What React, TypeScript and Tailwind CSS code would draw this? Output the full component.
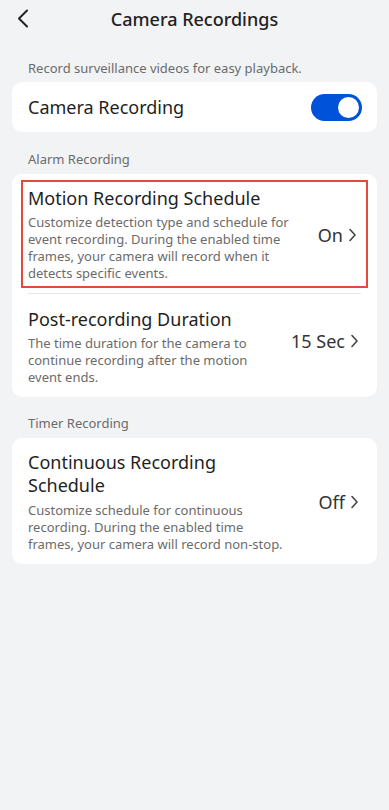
import React from "react";

const Chevron = () => (
  <svg width="9" height="14" viewBox="0 0 9 14" fill="none" className="ml-[5px]">
    <path d="M2 1.5 L7 7 L2 12.5" stroke="#444" strokeWidth="1.6" strokeLinecap="round" strokeLinejoin="round" />
  </svg>
);

export default function App() {
  return (
    <div
      className="w-[389px] min-h-[810px] bg-[#f2f3f5] text-[#1f1f1f]"
      style={{ fontFamily: '"Noto Sans", "Open Sans", Arial, sans-serif' }}
    >
      {/* Header */}
      <div className="relative h-[38px] flex items-center justify-center">
        <svg width="14" height="20" viewBox="0 0 14 20" fill="none" className="absolute left-[16px] top-[9px]">
          <path d="M11 1.5 L3 9.5 L11 17.5" stroke="#222" strokeWidth="2" strokeLinecap="round" strokeLinejoin="round" />
        </svg>
        <div className="text-[18px] leading-[24px] font-medium text-[#222]">Camera Recordings</div>
      </div>

      <div className="px-[28px] pt-[22px] pb-[5px] text-[13px] leading-[17px] text-[#6b6b6b]">
        Record surveillance videos for easy playback.
      </div>

      {/* Card 1 */}
      <div className="mx-[12px] h-[50px] bg-white rounded-[10px] flex items-center justify-between pl-[16px] pr-[15px]">
        <div className="text-[18px] leading-[24px]">Camera Recording</div>
        <div className="w-[51px] h-[27px] rounded-full bg-[#0052d9] flex items-center justify-end pr-[3px]">
          <div className="w-[21px] h-[21px] rounded-full bg-white" />
        </div>
      </div>

      <div className="px-[28px] pt-[19px] pb-[6px] text-[13px] leading-[17px] text-[#6b6b6b]">Alarm Recording</div>

      {/* Card 2 */}
      <div className="mx-[12px] bg-white rounded-[10px] pt-[6px] pb-[11px]">
        <div className="mx-[9px] border-2 border-[#e8473c] flex items-center justify-between pl-[5px] pr-[9px] pt-[5px] pb-[4px]">
          <div>
            <div className="text-[18px] leading-[23px] whitespace-nowrap">Motion Recording Schedule</div>
            <div className="mt-[4px] text-[13px] leading-[17px] text-[#6b6b6b] whitespace-nowrap">
              Customize detection type and schedule for
              <br />
              event recording. During the enabled time
              <br />
              frames, your camera will record when it
              <br />
              detects specific events.
            </div>
          </div>
          <div className="flex items-center text-[18px] leading-[24px] text-[#333]">
            On
            <Chevron />
          </div>
        </div>
        <div className="mx-[16px] mt-[5px] h-px bg-[#e6e6e6]" />
        <div className="flex items-center justify-between pl-[16px] pr-[18px] pt-[14px]">
          <div>
            <div className="text-[18px] leading-[23px] whitespace-nowrap">Post-recording Duration</div>
            <div className="mt-[4px] text-[13px] leading-[17px] text-[#6b6b6b] whitespace-nowrap">
              The time duration for the camera to
              <br />
              continue recording after the motion
              <br />
              event ends.
            </div>
          </div>
          <div className="flex items-center text-[18px] leading-[24px] text-[#333] mb-[12px]">
            15 Sec
            <Chevron />
          </div>
        </div>
      </div>

      <div className="px-[28px] pt-[18px] pb-[6px] text-[13px] leading-[17px] text-[#6b6b6b]">Timer Recording</div>

      {/* Card 3 */}
      <div className="mx-[12px] bg-white rounded-[10px] flex items-center justify-between pl-[16px] pr-[18px] pt-[13px] pb-[11px]">
        <div>
          <div className="text-[18px] leading-[23px] whitespace-nowrap">
            Continuous Recording
            <br />
            Schedule
          </div>
          <div className="mt-[5px] text-[13px] leading-[17px] text-[#6b6b6b] whitespace-nowrap">
            Customize schedule for continuous
            <br />
            recording. During the enabled time
            <br />
            frames, your camera will record non-stop.
          </div>
        </div>
        <div className="flex items-center text-[18px] leading-[24px] text-[#333]">
          Off
          <Chevron />
        </div>
      </div>
    </div>
  );
}
